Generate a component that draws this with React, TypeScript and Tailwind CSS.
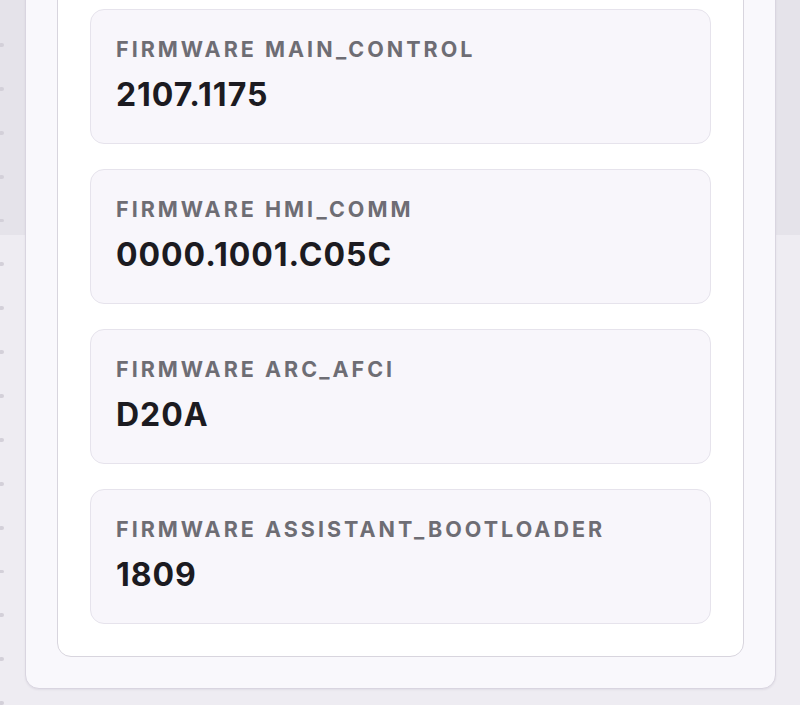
import React from "react";

type Firmware = { name: string; version: string };

const items: Firmware[] = [
  { name: "Firmware MAIN_CONTROL", version: "2107.1175" },
  { name: "Firmware HMI_COMM", version: "0000.1001.C05C" },
  { name: "Firmware ARC_AFCI", version: "D20A" },
  { name: "Firmware ASSISTANT_BOOTLOADER", version: "1809" },
];

const dots = Array.from({ length: 16 });

export default function App() {
  return (
    <div
      className="flex h-[705px] overflow-hidden bg-[linear-gradient(to_bottom,#e5e3ea_235px,#eeecf2_235px)]"
      style={{ fontFamily: "Inter, 'Noto Sans', sans-serif" }}
    >
      <div className="w-[25px] shrink-0 flex flex-col pt-[43px] gap-[40px]">
        {dots.map((_, i) => (
          <div key={i} className="w-[5px] h-[5px] rounded-full bg-[#d3d0d9] -ml-[1px]" />
        ))}
      </div>

      <div className="flex-1 flex flex-col">
        <div className="-mt-[40px] mb-[17px] flex-1 rounded-b-[14px] border border-[#d9d5e0] bg-[#f9f8fc] px-[31px] pb-[31px] pt-[40px] shadow-[0_1px_2px_rgba(60,50,90,0.08)]">
          <div className="-mt-[40px] h-[calc(100%+40px)] rounded-b-[14px] border border-[#d8d5de] bg-white px-[32px] pb-[32px] pt-[47px]">
            <div className="flex flex-col gap-[25px]">
              {items.map((it) => (
                <div
                  key={it.name}
                  className="rounded-[14px] border-[1.5px] border-[#e6e3ec] bg-[#f8f6fb] px-[25px] pt-[25px] pb-[28px]"
                >
                  <div className="text-[21.5px] leading-[28px] font-bold uppercase tracking-[0.14em] text-[#6e6d74]">
                    {it.name}
                  </div>
                  <div className="mt-[12px] text-[32px] leading-[40px] font-bold tracking-[0.03em] text-[#1c1b21]">
                    {it.version}
                  </div>
                </div>
              ))}
            </div>
          </div>
        </div>
      </div>

      <div className="w-[24px] shrink-0" />
    </div>
  );
}
